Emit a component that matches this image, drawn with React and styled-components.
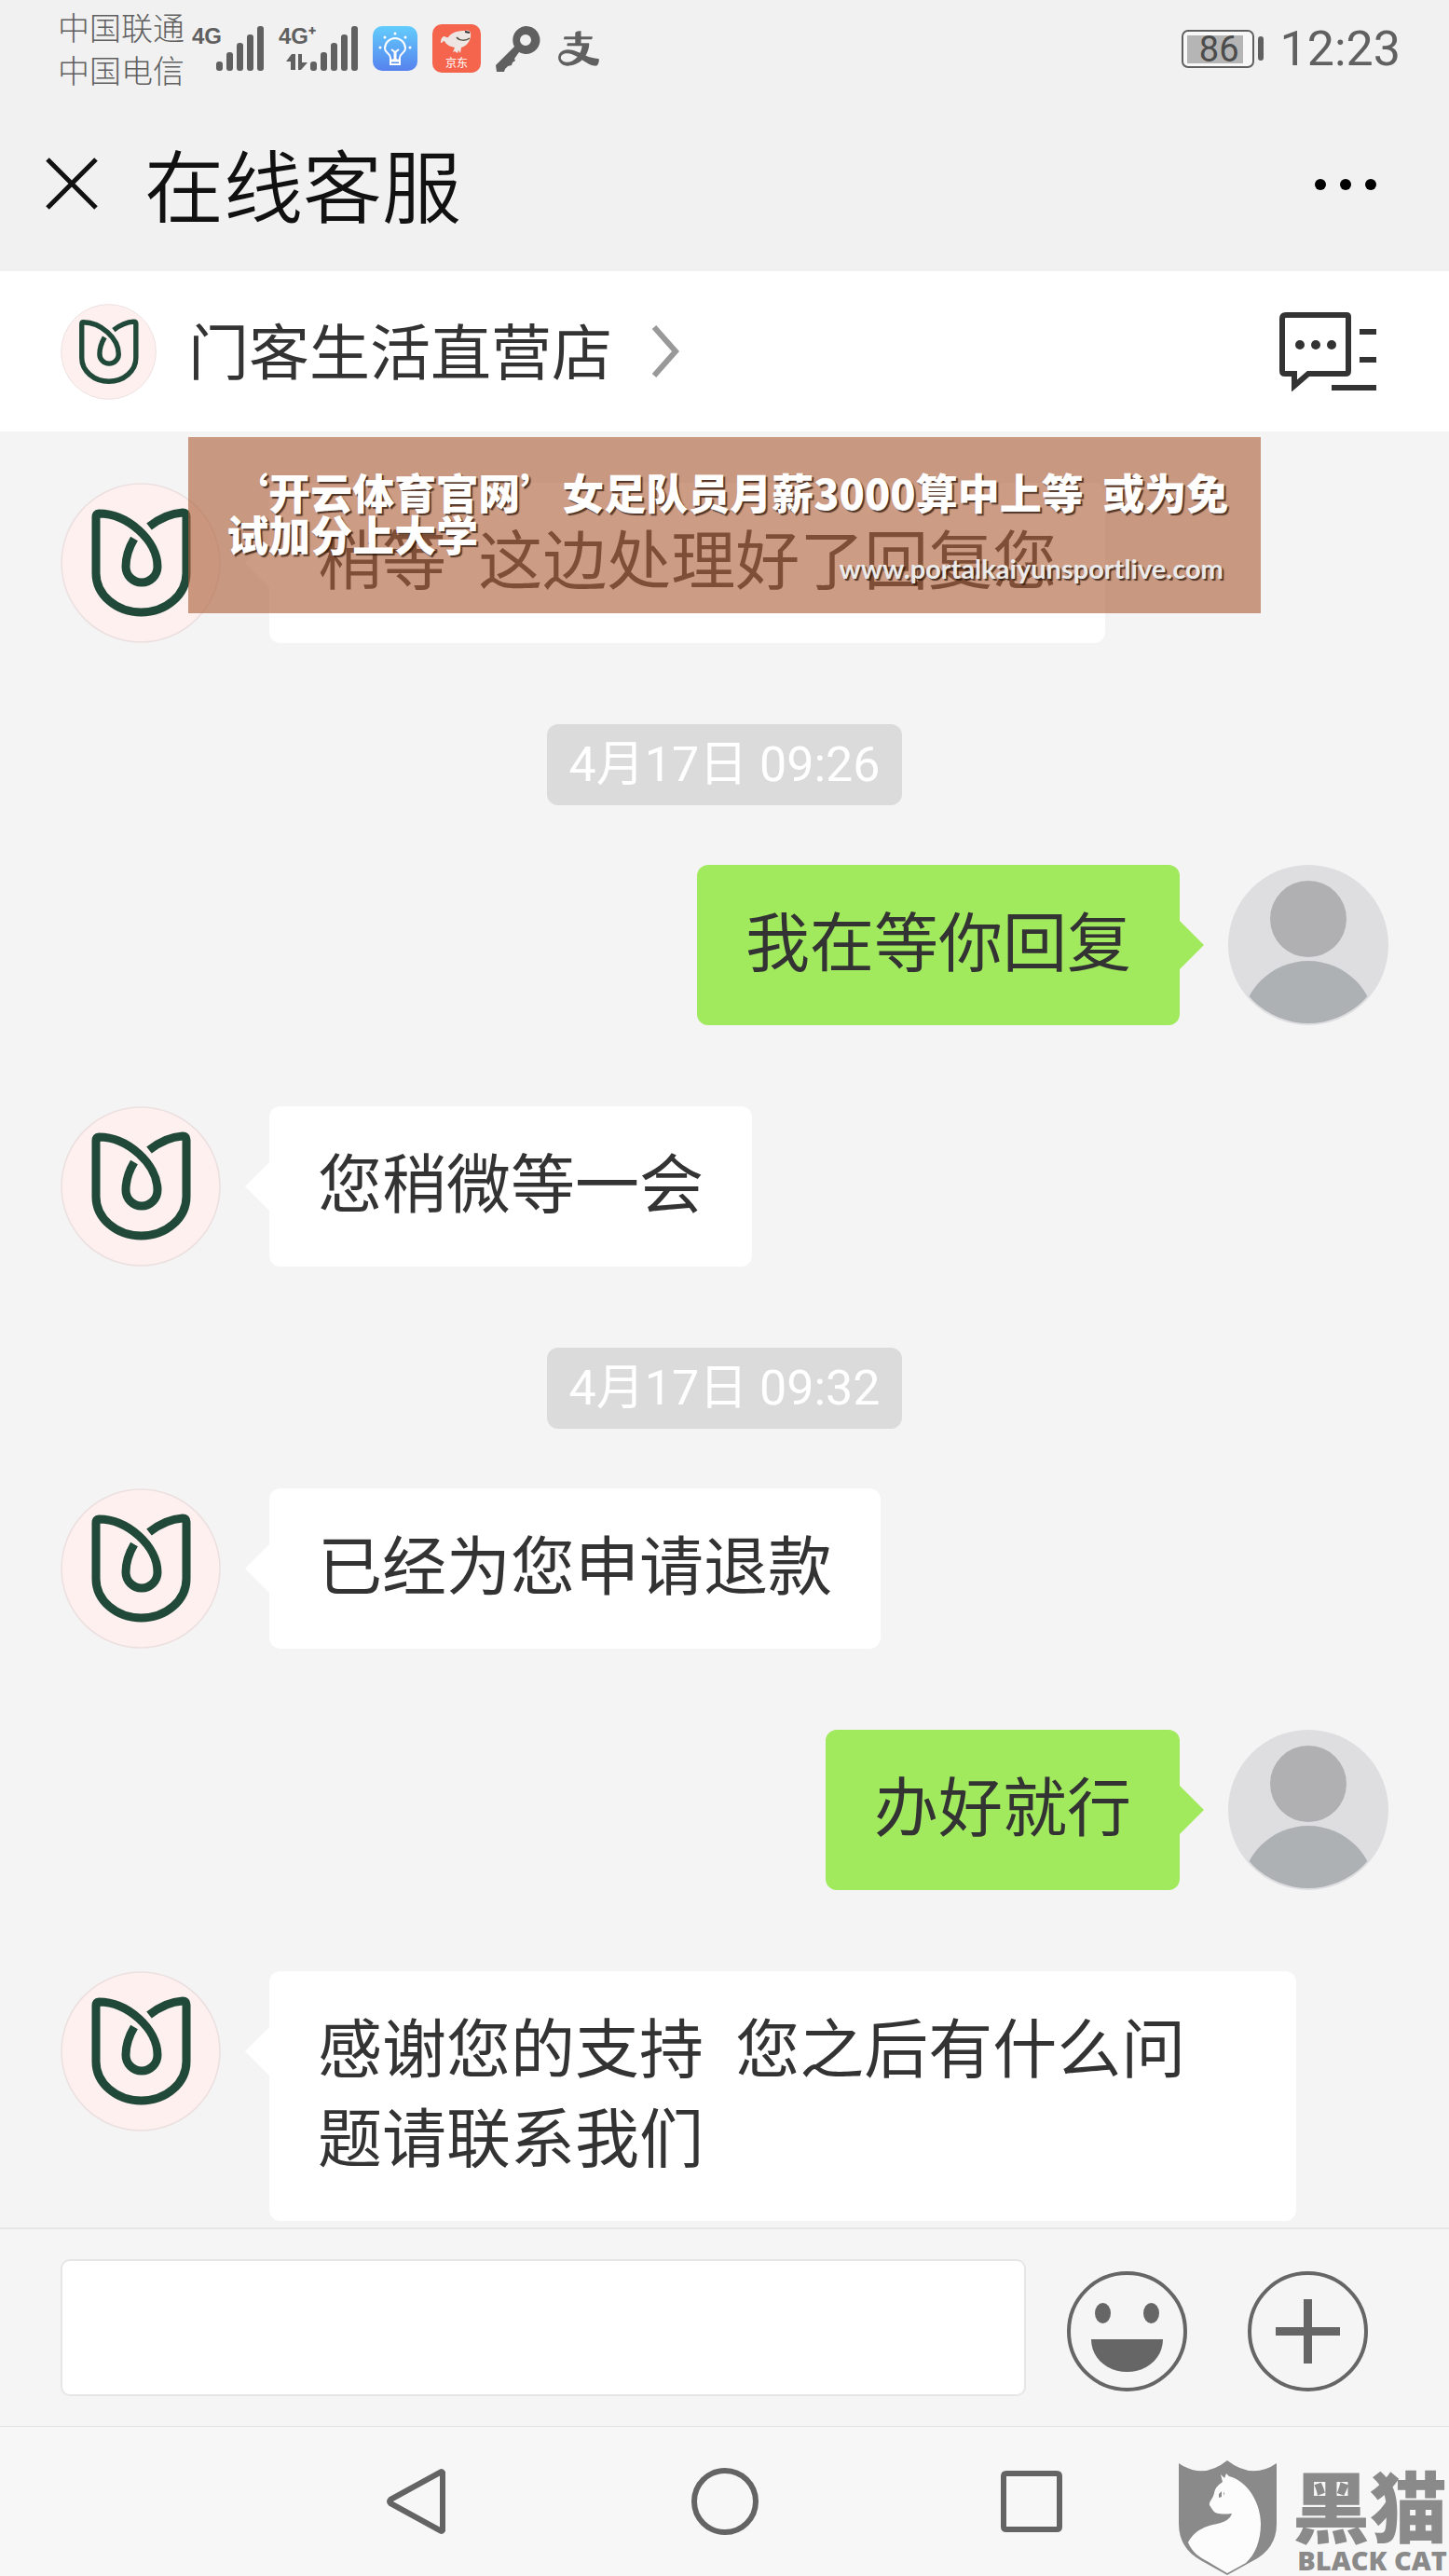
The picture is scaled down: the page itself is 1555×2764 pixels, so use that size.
import styled, { createGlobalStyle } from "styled-components";
import { AiOutlineAlipay } from "react-icons/ai";

const GlobalStyle = createGlobalStyle`
* {
  box-sizing: border-box;
}
body {
  margin: 0;
  background: #f4f4f4;
  color: #333;
  font-family: Roboto, "Noto Sans CJK SC", sans-serif;
}
button {
  border: 0;
  padding: 0;
  background: none;
  cursor: pointer;
  display: flex;
}
svg {
  display: block;
  flex: none;
}
`;

const Page = styled.div`
  position: relative;
  display: flex;
  flex-direction: column;
  min-height: 100vh;
`;

/* status bar */

const StatusBar = styled.div`
  display: flex;
  justify-content: space-between;
  align-items: center;
  height: 104px;
  padding: 0 52px 0 62px;
  background: #f1f1f1;
  color: #606060;
`;

const StatusGroup = styled.div`
  display: flex;
  align-items: center;
  gap: ${(props) => props.$gap}px;
`;

const Carriers = styled.div`
  padding-top: 4px;
  font-size: 34px;
  line-height: 46px;
  font-weight: 300;
  margin-right: -8px;
`;

const Signal = styled.div`
  display: flex;
  align-items: flex-end;
`;

/* the first bars are short, so the label may reach over them */
const SignalLabel = styled.div`
  display: flex;
  flex-direction: column;
  justify-content: space-between;
  height: 48px;
  margin-right: -6px;
  font-family: "Liberation Sans Narrow", "Liberation Sans", sans-serif;
  font-size: 24px;
  font-weight: 700;
  line-height: 22px;
`;

const Battery = styled.div`
  display: flex;
  align-items: center;
  gap: 4px;
`;

const BatteryBody = styled.div`
  width: 78px;
  height: 41px;
  padding: 4px;
  border: 2px solid #606060;
  border-radius: 7px;
  background: #f8f8f8;
`;

const BatteryLevel = styled.div`
  width: 60px;
  height: 30px;
  padding-right: 4px;
  background: #b5b5b5;
  color: #4c4c4c;
  font-size: 38px;
  line-height: 31px;
  display: flex;
  justify-content: flex-end;
`;

const BatteryCap = styled.div`
  width: 6px;
  height: 26px;
  border-radius: 3px;
  background: #606060;
`;

const Clock = styled.div`
  padding-top: 2px;
  font-size: 52px;
  line-height: 60px;
`;

/* title bar */

const TitleBar = styled.header`
  display: flex;
  align-items: center;
  height: 187px;
  padding: 0 78px 0 49px;
  background: #f1f1f1;
  color: #111;
`;

const Title = styled.h1`
  flex: 1;
  margin: 0 0 0 49px;
  padding-top: 12px;
  font-size: 85px;
  font-weight: 350;
  line-height: 120px;
`;

/* shop bar */

const ShopBar = styled.div`
  display: flex;
  align-items: center;
  height: 172px;
  padding: 0 78px 0 65px;
  background: #fff;
`;

const ShopLink = styled.a`
  display: flex;
  align-items: center;
  flex: 1;
  color: #333;
  text-decoration: none;
`;

const ShopName = styled.span`
  margin: 0 42px 0 34px;
  padding-top: 6px;
  font-size: 65px;
  line-height: 100px;
`;

/* messages */

const Messages = styled.main`
  flex: 1;
  display: flex;
  flex-direction: column;
  padding: 55px 65px 5px;
`;

const Time = styled.time`
  align-self: center;
  margin: 0 0 64px;
  padding: 0 23px;
  border-radius: 12px;
  background: #dbdbdb;
  color: #fff;
  font-size: 52px;
  line-height: 87px;
`;

const Row = styled.div`
  display: flex;
  align-items: flex-start;
  flex-direction: ${(props) => (props.$mine ? "row-reverse" : "row")};
  gap: 52px;
  margin-bottom: 87px;

  &:last-child {
    margin-bottom: 0;
  }
`;

const Bubble = styled.div`
  position: relative;
  max-width: 1102px;
  padding: 38px 52px;
  border-radius: 12px;
  background: ${(props) => (props.$mine ? "#a1e95d" : "#fff")};
  font-size: 69px;
  line-height: 96px;

  &::before {
    content: "";
    position: absolute;
    top: 60px;
    ${(props) => (props.$mine ? "right" : "left")}: -26px;
    border: 26px solid transparent;
    border-${(props) => (props.$mine ? "right" : "left")}-width: 0;
    border-${(props) => (props.$mine ? "left" : "right")}-color: ${(props) =>
      props.$mine ? "#a1e95d" : "#fff"};
  }
`;

/* input bar */

const InputBar = styled.form`
  display: flex;
  align-items: center;
  height: 214px;
  padding: 0 87px 0 65px;
  border-top: 2px solid #e6e6e6;
  border-bottom: 1px solid #e2e2e2;
  background: #f5f5f5;
`;

const TextField = styled.input`
  flex: 1;
  min-width: 0;
  height: 147px;
  padding: 0 30px;
  border: 2px solid #e6e6e6;
  border-radius: 10px;
  background: #fff;
  font: inherit;
  font-size: 65px;
  outline: none;
`;

const ToolButtons = styled.div`
  display: flex;
  gap: 65px;
  padding: 8px 0 0 44px;
`;

/* system navigation */

const NavBar = styled.nav`
  display: flex;
  justify-content: center;
  align-items: center;
  gap: 259px;
  height: 160px;
  background: #f7f7f7;
`;

/* overlays */

const Banner = styled.aside`
  position: absolute;
  top: 469px;
  left: 13%;
  right: 13%;
  height: 189px;
  padding: 36px 32px 0 41px;
  background: rgba(173, 96, 56, 0.62);
  color: #fff;
  text-shadow: 2px 2px 1px rgba(40, 20, 10, 0.75);
`;

const BannerTitle = styled.div`
  font-family: "Noto Sans CJK SC", sans-serif;
  font-size: 45px;
  font-weight: 900;
  line-height: 45px;
`;

const BannerSite = styled.div`
  margin-right: 8px;
  color: #eaeaea;
  font-family: Lato, sans-serif;
  font-size: 29px;
  font-weight: 700;
  line-height: 30px;
  text-align: right;
`;

const Watermark = styled.div`
  position: absolute;
  right: 2px;
  bottom: 1px;
  display: flex;
  align-items: flex-end;
  gap: 17px;
  color: #8a8a8a;
`;

const WatermarkText = styled.div`
  display: flex;
  flex-direction: column;
  align-items: flex-end;
`;

const WatermarkName = styled.span`
  font-family: "Noto Sans CJK SC", sans-serif;
  font-size: 83px;
  font-weight: 900;
  line-height: 90px;
`;

const WatermarkLatin = styled.span`
  font-family: "Open Sans", sans-serif;
  font-size: 29px;
  font-weight: 800;
  line-height: 32px;
`;

const Bars = () => (
  <svg width="51" height="48" viewBox="0 0 51 48" fill="#606060">
    <rect x="0" y="38" width="7" height="10" rx="3" />
    <rect x="11" y="28" width="7" height="20" rx="3" />
    <rect x="22" y="18" width="7" height="30" rx="3" />
    <rect x="33" y="9" width="7" height="39" rx="3" />
    <rect x="44" y="0" width="7" height="48" rx="3" />
  </svg>
);

const DataArrows = () => (
  <svg width="32" height="18" viewBox="0 0 32 18" fill="#606060">
    <path d="M14 0h4v17h-5V8H8zM21 0h4v9h6l-7 8h-3z" />
  </svg>
);

const BulbIcon = () => (
  <svg width="48" height="48" viewBox="0 0 48 48" fill="none">
    <defs>
      <linearGradient id="bulb" x1="0" y1="0" x2="0" y2="1">
        <stop offset="0" stopColor="#63cdfc" />
        <stop offset="1" stopColor="#5682ee" />
      </linearGradient>
    </defs>
    <rect width="48" height="48" rx="10" fill="url(#bulb)" />
    <path
      d="M19 34c0-5-6-5-6-10a11 11 0 0 1 22 0c0 5-6 5-6 10v7H19v-7"
      stroke="#fff"
      strokeWidth="2"
    />
    <path d="M19 37h10M24 37V28" stroke="#fff" strokeWidth="3" />
    <path d="M20 25l4 3 4-3" stroke="#fff" strokeWidth="2" />
    <g fill="#fff">
      <circle cx="24" cy="8" r="1.5" />
      <circle cx="13" cy="12" r="1.5" />
      <circle cx="35" cy="12" r="1.5" />
      <circle cx="8" cy="23" r="1.5" />
      <circle cx="40" cy="23" r="1.5" />
    </g>
  </svg>
);

const JdIcon = () => (
  <svg width="52" height="52" viewBox="0 0 52 52">
    <rect width="52" height="52" rx="10" fill="#f5654e" />
    <path
      d="M9 20c0-5 2-7 4-7 1 0 2 2 4 1 4-6 11-7 18-7 2-1 6-1 6 3 1 6-3 13-10 15l-1 6-2-3-1 3-3-2-2 1 2-5c-5-1-9-3-11-7-2 0-2 2-4 2z"
      fill="#eee6e2"
    />
    <path d="M26 14c3 4 10 4 14 1" fill="none" stroke="#554" strokeWidth="1.5" />
    <path d="M35 8l5 1" stroke="#333" strokeWidth="2" />
    <text x="26" y="46" fontSize="12" fill="#fff" textAnchor="middle">京东</text>
  </svg>
);

const KeyIcon = () => (
  <svg width="48" height="49" viewBox="0 0 48 49" fill="#606060">
    <path
      fillRule="evenodd"
      d="M32 0a15 15 0 1 1-7 28l-5 7 1 2-3 2-1 3-4 1-3 3-1 3H1l-1-7 20-20A15 15 0 0 1 32 0zm0 9a6 6 0 1 0 0 12 6 6 0 0 0 0-12z"
    />
  </svg>
);

const CloseIcon = () => (
  <svg width="57" height="57" viewBox="0 0 57 57" stroke="#111" strokeWidth="5">
    <path d="M2 2l52 52M54 2L2 54" />
  </svg>
);

const MoreIcon = () => (
  <svg width="66" height="12" viewBox="0 0 66 12">
    <circle cx="6" cy="6" r="6" />
    <circle cx="33" cy="6" r="6" />
    <circle cx="60" cy="6" r="6" />
  </svg>
);

const ChevronIcon = () => (
  <svg width="30" height="56" viewBox="0 0 30 56" fill="none" stroke="#999" strokeWidth="6">
    <path d="M3 2l23 26L3 54" />
  </svg>
);

const ChatListIcon = () => (
  <svg width="104" height="85" viewBox="0 0 104 85" fill="none" stroke="#333" strokeWidth="6">
    <path d="M7 3h65q2 0 2 2v58q0 3-3 3H31L16 79V66H6q-3 0-3-3V7q0-4 4-4z" />
    <path d="M86 21h18M86 51h18M56 81h48" />
    <g fill="#333" stroke="none">
      <circle cx="22" cy="35" r="5" />
      <circle cx="39" cy="35" r="5" />
      <circle cx="56" cy="35" r="5" />
    </g>
  </svg>
);

const ShopAvatar = ({ size = 172 }) => (
  <svg width={size} height={size} viewBox="0 0 172 172" fill="none">
    <circle cx="86" cy="86" r="85" fill="#fdf0ee" stroke="#ecdfe0" strokeWidth="1.5" />
    <path
      d="M79 60C73 70 70 80 70 90a17 17 0 0 0 34 0C104 62 72 33 41 33q-3 0-3 4v60a48.500 42 0 0 0 97 0V36q0-4-4-4-18 1-36 15"
      stroke="#21493a"
      strokeWidth="9"
    />
  </svg>
);

const UserAvatar = () => (
  <svg width="172" height="172" viewBox="0 0 172 172">
    <clipPath id="face">
      <circle cx="86" cy="86" r="84" />
    </clipPath>
    <circle cx="86" cy="86" r="86" fill="#dedee1" />
    <circle cx="86" cy="58" r="41" fill="#b0b0b3" />
    <circle cx="86" cy="175" r="72" fill="#adb1b4" clipPath="url(#face)" />
  </svg>
);

const SmileIcon = () => (
  <svg width="129" height="129" viewBox="0 0 129 129" fill="#666">
    <circle cx="64.500" cy="64.500" r="62.500" fill="none" stroke="#666" strokeWidth="4" />
    <ellipse cx="38.500" cy="45" rx="8.500" ry="11" />
    <ellipse cx="90.500" cy="45" rx="8.500" ry="11" />
    <path d="M26 73h77c0 20-17 35-38.500 35S26 93 26 73z" />
  </svg>
);

const PlusIcon = () => (
  <svg width="129" height="129" viewBox="0 0 129 129" fill="none" stroke="#666">
    <circle cx="64.500" cy="64.500" r="62.500" strokeWidth="4" />
    <path d="M30 64.500h69M64.500 30v69" strokeWidth="9" />
  </svg>
);

const navShapes = [
  { label: "返回", d: "M64 5v62q-1 2-3 0L8 38q-2-2 0-4L61 5q2-2 3 0z" },
  { label: "主页", d: "M36 3a33 33 0 1 1 0 66 33 33 0 0 1 0-66z" },
  { label: "最近任务", d: "M7 6h54q3 0 3 3v54q0 3-3 3H7q-3 0-3-3V9q0-3 3-3z" },
];

const ShieldCat = () => (
  <svg width="105" height="123" viewBox="0 0 105 123">
    <path
      d="M0 3Q26 21 52 0q27 21 53 3v65q0 27-26 40l-27 15-27-15Q0 95 0 68z"
      fill="#8a8a8a"
    />
    <path
      d="M45 15l4 4 2-5 3 3c22 6 34 31 34 51 0 18-6 33-16 42l-20 11-20-12C22 104 14 98 10 88c8-15 22-18 31-20 9-2 14-5 16-11-10 1-17 1-20-3l-4-6c-1-4 4-7 5-13 1-6 5-9 9-12z"
      fill="#fcfcfc"
    />
    <path d="M43 36l3-3v6l-3 1zM48 34v4l1-3z" fill="#8a8a8a" />
  </svg>
);

const chat = [
  { text: "稍等\u00a0\u00a0这边处理好了回复您" },
  { time: "4月17日 09:26" },
  { text: "我在等你回复", mine: true },
  { text: "您稍微等一会" },
  { time: "4月17日 09:32" },
  { text: "已经为您申请退款" },
  { text: "办好就行", mine: true },
  { text: "感谢您的支持\u00a0\u00a0您之后有什么问题请联系我们" },
];

const App = () => {
  return (
    <Page>
      <GlobalStyle />
      <StatusBar>
        <StatusGroup $gap={16}>
          <Carriers>
            <div>中国联通</div>
            <div>中国电信</div>
          </Carriers>
          <Signal>
            <SignalLabel>4G</SignalLabel>
            <Bars />
          </Signal>
          <Signal>
            <SignalLabel>
              4G⁺
              <DataArrows />
            </SignalLabel>
            <Bars />
          </Signal>
          <BulbIcon />
          <JdIcon />
          <KeyIcon />
          <AiOutlineAlipay size={50} />
        </StatusGroup>
        <StatusGroup $gap={18}>
          <Battery>
            <BatteryBody>
              <BatteryLevel>86</BatteryLevel>
            </BatteryBody>
            <BatteryCap />
          </Battery>
          <Clock>12:23</Clock>
        </StatusGroup>
      </StatusBar>

      <TitleBar>
        <button aria-label="关闭">
          <CloseIcon />
        </button>
        <Title>在线客服</Title>
        <button aria-label="更多">
          <MoreIcon />
        </button>
      </TitleBar>

      <ShopBar>
        <ShopLink href="#shop">
          <ShopAvatar size={103} />
          <ShopName>门客生活直营店</ShopName>
          <ChevronIcon />
        </ShopLink>
        <button aria-label="会话列表">
          <ChatListIcon />
        </button>
      </ShopBar>

      <Messages>
        {chat.map((item, i) =>
          item.time ? (
            <Time key={i}>{item.time}</Time>
          ) : (
            <Row key={i} $mine={item.mine}>
              {item.mine ? <UserAvatar /> : <ShopAvatar />}
              <Bubble $mine={item.mine}>{item.text}</Bubble>
            </Row>
          )
        )}
      </Messages>

      <InputBar onSubmit={(e) => e.preventDefault()}>
        <TextField type="text" aria-label="消息" />
        <ToolButtons>
          <button type="button" aria-label="表情">
            <SmileIcon />
          </button>
          <button type="button" aria-label="添加">
            <PlusIcon />
          </button>
        </ToolButtons>
      </InputBar>

      <NavBar>
        {navShapes.map((shape) => (
          <button key={shape.label} aria-label={shape.label}>
            <svg width="72" height="72" viewBox="0 0 72 72" fill="none" stroke="#646464" strokeWidth="6">
              <path d={shape.d} />
            </svg>
          </button>
        ))}
      </NavBar>

      <Banner>
        <BannerTitle>‘开云体育官网’女足队员月薪3000算中上等&nbsp; 或为免试加分上大学</BannerTitle>
        <BannerSite>www.portalkaiyunsportlive.com</BannerSite>
      </Banner>

      <Watermark>
        <ShieldCat />
        <WatermarkText>
          <WatermarkName>黑猫</WatermarkName>
          <WatermarkLatin>BLACK CAT</WatermarkLatin>
        </WatermarkText>
      </Watermark>
    </Page>
  );
};

export default App;
